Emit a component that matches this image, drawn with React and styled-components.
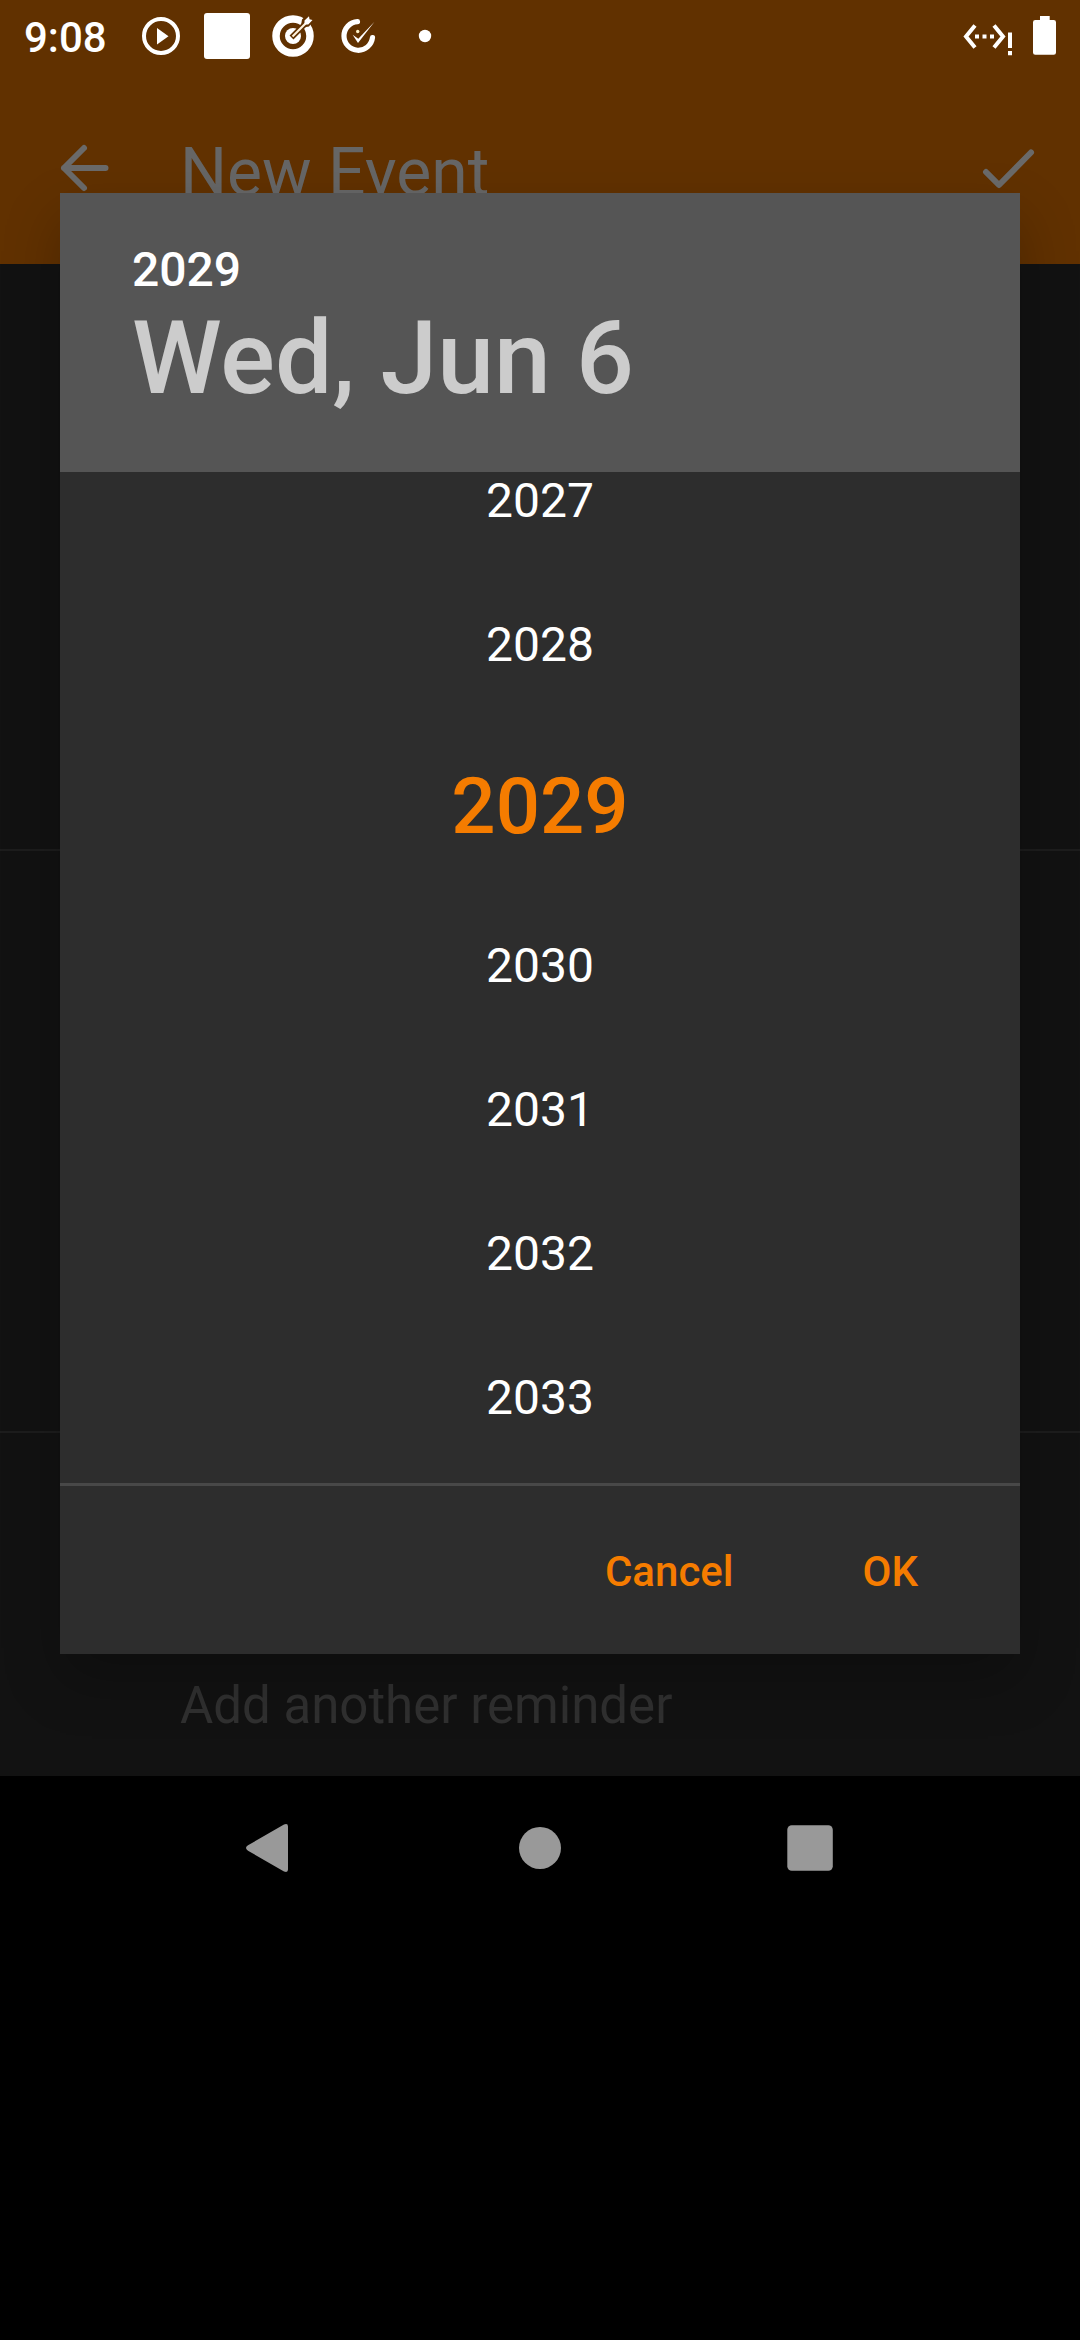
import React from 'react';
import styled, { createGlobalStyle } from 'styled-components';

const GlobalStyle = createGlobalStyle`
  * { box-sizing: border-box; }
  body { margin: 0; background: #000; font-family: Roboto, "Liberation Sans", sans-serif; }
`;

const Screen = styled.div`
  position: relative;
  display: flex;
  flex-direction: column;
  width: 1080px;
  height: 2340px;
  overflow: hidden;
  background: #000;
`;

const StatusBar = styled.header`
  display: flex;
  justify-content: space-between;
  align-items: center;
  height: 72px;
  padding: 0 24px;
  background: #613100;
  color: #fff;
`;

const StatusGroup = styled.div`
  display: flex;
  align-items: center;
  height: 72px;
`;

const Clock = styled.span`
  width: 116px;
  font-size: 42px;
  font-weight: 500;
  line-height: 48px;
  padding-top: 3px;
`;

const StatusIcon = styled.svg`
  display: block;
  flex: none;
  width: ${(p) => p.$w}px;
  height: 72px;
`;

const AppBar = styled.div`
  display: flex;
  align-items: center;
  height: 192px;
  padding: 0 42px 0 57px;
  background: #613100;
  color: #6a6a6a;
`;

const AppBarIcon = styled.svg`
  display: block;
  flex: none;
  width: 56px;
  height: 56px;
`;

const AppTitle = styled.h1`
  flex: 1;
  margin: 0 0 0 67px;
  padding-top: 9px;
  font-size: 66px;
  line-height: 78px;
  font-weight: 400;
  color: #666;
`;

const Form = styled.main`
  height: 1512px;
  background: #121212;
`;

const FormSection = styled.section`
  height: ${(p) => p.$h}px;
  border-bottom: 2px solid #1d1d1d;
`;

const Reminder = styled.div`
  padding: 243px 0 0 180px;
  font-size: 51px;
  line-height: 60px;
  color: #303030;
`;

const NavBar = styled.nav`
  display: flex;
  justify-content: center;
  gap: 198px;
  height: 144px;
  align-items: center;
`;

const NavIcon = styled.svg`
  display: block;
  width: 72px;
  height: 72px;
  fill: #999;
`;

const Dialog = styled.div`
  position: absolute;
  top: 193px;
  left: 60px;
  width: 960px;
  height: 1461px;
  display: flex;
  flex-direction: column;
  background: #2d2d2d;
  box-shadow: 0 26px 54px rgba(0, 0, 0, 0.24);
`;

const DialogHeader = styled.div`
  height: 279px;
  padding: 48px 72px 0;
  background: #555;
`;

const HeaderYear = styled.div`
  font-size: 48px;
  line-height: 57px;
  font-weight: 500;
  color: #fff;
`;

const HeaderDate = styled.div`
  font-size: 102px;
  line-height: 120px;
  font-weight: 500;
  color: #ccc;
`;

const YearList = styled.div`
  display: flex;
  flex-direction: column;
  justify-content: flex-end;
  height: 1011px;
  overflow: hidden;
`;

const Year = styled.div`
  flex: none;
  height: ${(p) => (p.$selected ? 177 : 144)}px;
  line-height: ${(p) => (p.$selected ? 180 : 144)}px;
  text-align: center;
  font-size: ${(p) => (p.$selected ? 78 : 48)}px;
  font-weight: ${(p) => (p.$selected ? 500 : 400)};
  color: ${(p) => (p.$selected ? '#f57c00' : '#fff')};
`;

const YearListEnd = styled.div`
  flex: none;
  height: 13px;
`;

const Actions = styled.div`
  display: flex;
  justify-content: flex-end;
  align-items: center;
  gap: 129px;
  height: 171px;
  padding: 0 102px 0 0;
  border-top: 3px solid #484848;
`;

const Action = styled.button`
  border: 0;
  padding: 4px 0 0;
  background: none;
  font: 500 42px/50px Roboto, "Liberation Sans", sans-serif;
  color: #f57c00;
`;

const YEARS = [2027, 2028, 2029, 2030, 2031, 2032, 2033];
const SELECTED_YEAR = 2029;

export default function App() {
  return (
    <Screen>
      <GlobalStyle />
      <StatusBar>
        <StatusGroup>
          <Clock>9:08</Clock>
          <StatusIcon $w={42} viewBox="140 0 42 72">
            <circle cx="161" cy="36" r="17" fill="none" stroke="#fff" strokeWidth="4" />
            <path d="M157 28v16.500l11.500-8.250z" fill="#fff" />
          </StatusIcon>
          <StatusIcon $w={90} viewBox="182 0 90 72">
            <rect x="204" y="13" width="46" height="46" rx="3" fill="#fff" />
          </StatusIcon>
          <StatusIcon $w={68} viewBox="272 0 68 72">
            <circle cx="293" cy="36" r="17" fill="none" stroke="#fff" strokeWidth="7.500" />
            <circle cx="293" cy="36" r="8" fill="#fff" />
            <path d="M291.500 37.500L304 25" stroke="#613100" strokeWidth="5.500" />
            <path d="M301 25.500l1-6 6-6 6 6-5 7-6 1z" fill="#613100" />
            <path d="M292.500 36.500L308 21" stroke="#fff3dd" strokeWidth="2.200" />
            <path d="M304.500 24.500v-4l4.500-4.200.5 3 3 .6-4.200 4.600z" fill="#fff" />
          </StatusIcon>
          <StatusIcon $w={60} viewBox="340 0 60 72">
            <path d="M357.500 21.700A14.300 14.300 0 1 0 372.500 37.500" fill="none" stroke="#fff" strokeWidth="5.200" strokeLinecap="round" />
            <path d="M352.600 34.800l5.400 8.200L374.500 21.800 358.300 38.800z" fill="#fff" />
            <circle cx="357.700" cy="31.500" r="1.700" fill="#fff3c8" />
          </StatusIcon>
          <StatusIcon $w={40} viewBox="400 0 40 72">
            <circle cx="425" cy="36" r="6.200" fill="#fff" />
          </StatusIcon>
        </StatusGroup>
        <StatusGroup>
          <StatusIcon $w={60} viewBox="962 0 60 72">
            <path d="M975 25.500L966 36.500l9 11M994 25.500l9 11-9 11" fill="none" stroke="#fff" strokeWidth="4" />
            <path d="M975 34.500h4v4h-4zM982.500 34.500h4v4h-4zM990 34.500h4v4h-4zM1008 32.500h4v15.500h-4zM1008 51h4v4.200h-4z" fill="#fff" />
          </StatusIcon>
          <StatusIcon $w={34} viewBox="1022 0 34 72">
            <path d="M1040 16h9.700v4h4q2.300 0 2.300 2.300v30.200q0 2.300-2.300 2.300h-18.400q-2.300 0-2.300-2.300V22.300q0-2.300 2.300-2.300h4.700z" fill="#fff" />
          </StatusIcon>
        </StatusGroup>
      </StatusBar>
      <AppBar>
        <AppBarIcon viewBox="57 140 56 56">
          <path d="M105.500 168H64M84 148L64 168l20 20" fill="none" stroke="currentColor" strokeWidth="6" strokeLinecap="round" strokeLinejoin="round" />
        </AppBarIcon>
        <AppTitle>New Event</AppTitle>
        <AppBarIcon viewBox="982 140 56 56">
          <path d="M986 172l13 13 32-32.500" fill="none" stroke="currentColor" strokeWidth="6" strokeLinecap="round" strokeLinejoin="round" />
        </AppBarIcon>
      </AppBar>
      <Form>
        <FormSection $h={587} />
        <FormSection $h={582} />
        <Reminder>Add another reminder</Reminder>
      </Form>
      <NavBar>
        <NavIcon viewBox="234 1812 72 72">
          <path d="M248 1845.300L284 1824.500q4-1.500 4 2v43q0 3.500-4 2L248 1850.700q-4-2.700 0-5.400z" />
        </NavIcon>
        <NavIcon viewBox="504 1812 72 72">
          <circle cx="540" cy="1848" r="21" />
        </NavIcon>
        <NavIcon viewBox="774 1812 72 72">
          <rect x="787.300" y="1825.300" width="45.500" height="45.500" rx="4.500" />
        </NavIcon>
      </NavBar>
      <Dialog role="dialog">
        <DialogHeader>
          <HeaderYear>2029</HeaderYear>
          <HeaderDate>Wed, Jun 6</HeaderDate>
        </DialogHeader>
        <YearList>
          {YEARS.map((year) => (
            <Year key={year} $selected={year === SELECTED_YEAR}>{year}</Year>
          ))}
          <YearListEnd />
        </YearList>
        <Actions>
          <Action>Cancel</Action>
          <Action>OK</Action>
        </Actions>
      </Dialog>
    </Screen>
  );
}
